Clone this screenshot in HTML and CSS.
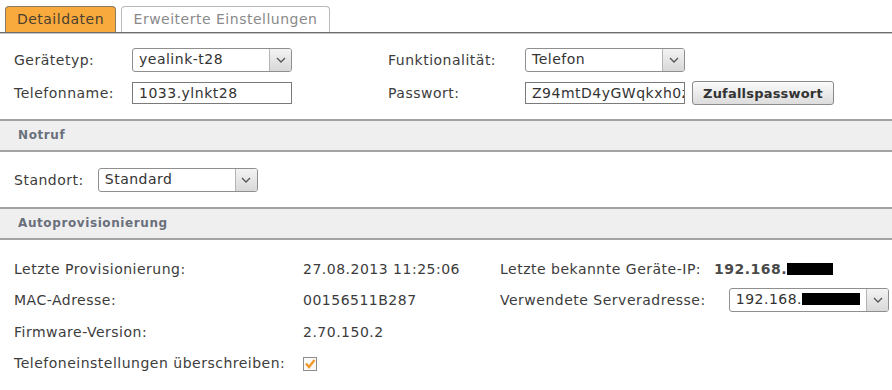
FILE: index.html
```html
<!DOCTYPE html>
<html lang="de">

<head>
  <meta charset="UTF-8">
  <title>Telefon bearbeiten</title>
  <link rel="stylesheet" href="styles.css">
</head>

<body>
  <div class="tabs">
    <div class="tab active">Detaildaten</div>
    <div class="tab">Erweiterte Einstellungen</div>
  </div>

  <div class="form-grid">
    <label>Gerätetyp:</label>
    <div class="select w160"><span class="sel-text">yealink-t28</span><span class="arrow"><svg width="10" height="6" viewBox="0 0 10 6"><path d="M1 1 L5 5 L9 1" fill="none" stroke="#555" stroke-width="1.3"/></svg></span></div>
    <label>Funktionalität:</label>
    <div class="select w160"><span class="sel-text">Telefon</span><span class="arrow"><svg width="10" height="6" viewBox="0 0 10 6"><path d="M1 1 L5 5 L9 1" fill="none" stroke="#555" stroke-width="1.3"/></svg></span></div>

    <label>Telefonname:</label>
    <div class="input w160">1033.ylnkt28</div>
    <label>Passwort:</label>
    <div class="pw-row">
      <div class="input w160 clip">Z94mtD4yGWqkxh0z</div>
      <button class="btn">Zufallspasswort</button>
    </div>
  </div>

  <div class="section-head">Notruf</div>

  <div class="standort">
    <label>Standort:</label>
    <div class="select w160"><span class="sel-text">Standard</span><span class="arrow"><svg width="10" height="6" viewBox="0 0 10 6"><path d="M1 1 L5 5 L9 1" fill="none" stroke="#555" stroke-width="1.3"/></svg></span></div>
  </div>

  <div class="section-head">Autoprovisionierung</div>

  <div class="info-grid">
    <span>Letzte Provisionierung:</span>
    <span>27.08.2013 11:25:06</span>
    <span>Letzte bekannte Geräte-IP: <b>192.168.</b><i class="redact r46"></i></span>

    <span>MAC-Adresse:</span>
    <span>00156511B287</span>
    <span class="server">Verwendete Serveradresse:
      <span class="select w160"><span class="sel-text">192.168.<i class="redact r58"></i></span><span class="arrow"><svg width="10" height="6" viewBox="0 0 10 6"><path d="M1 1 L5 5 L9 1" fill="none" stroke="#555" stroke-width="1.3"/></svg></span></span>
    </span>

    <span>Firmware-Version:</span>
    <span>2.70.150.2</span>
    <span></span>

    <span>Telefoneinstellungen überschreiben:</span>
    <span><span class="check"><svg width="12" height="12" viewBox="0 0 12 12"><path d="M2 5.5 L5 9 L10.5 2" fill="none" stroke="#f29a2e" stroke-width="2.4"/></svg></span></span>
    <span></span>
  </div>
</body>

</html>
```

FILE: styles.css
```css
:root {
  --text-color: #3c3c3c;
  --border-color: #8c8c8c;
  --orange: #f9aa3d;
  --head-bg: #efefef;
}

body {
  margin: 0;
  width: 892px;
  font-family: Verdana, "DejaVu Sans", sans-serif;
  font-size: 14px;
  letter-spacing: 0.5px;
  color: var(--text-color);
  background: #fff;
}

/* tabs */
.tabs {
  display: flex;
  gap: 5px;
  padding: 6px 0 0 5px;
  height: 26px;
  border-bottom: 1px solid #6f6f6f;
  box-shadow: 0 1px 0 #c4c4c4;
}

.tab {
  width: 207px;
  height: 25px;
  line-height: 24px;
  text-align: center;
  border: 1px solid #b9b9b9;
  border-bottom: none;
  border-radius: 4px 4px 0 0;
  color: #8a8a8a;
  background: #fff;
}

.tab.active {
  width: 109px;
  background: var(--orange);
  border-color: #8a7a62;
  color: #4a3f30;
}

/* top form */
.form-grid {
  display: grid;
  grid-template-columns: 118px 256px 137px auto;
  row-gap: 9px;
  align-items: center;
  padding: 15px 0 14px 14px;
}

.select {
  display: inline-flex;
  height: 24px;
  box-sizing: border-box;
  border: 1px solid #8f8f8f;
  border-radius: 3px;
  background: #fff;
  overflow: hidden;
  vertical-align: middle;
}

.w160 {
  width: 160px;
}

.sel-text {
  flex: 1;
  padding: 0 6px;
  line-height: 20px;
  color: #333;
  white-space: nowrap;
}

.arrow {
  width: 21px;
  flex: none;
  display: flex;
  align-items: center;
  justify-content: center;
  border-left: 1px solid #b5b5b5;
  background: linear-gradient(#f3f3f3, #d8d8d8);
}

.input {
  height: 22px;
  box-sizing: border-box;
  border: 1px solid #7a7a7a;
  padding: 0 6px;
  line-height: 20px;
  color: #333;
  white-space: nowrap;
}

.clip {
  overflow: hidden;
  padding-right: 0;
}

.pw-row {
  display: flex;
  align-items: center;
  gap: 7px;
}

.btn {
  height: 24px;
  padding: 0 10px;
  font-family: inherit;
  font-size: 13px;
  font-weight: bold;
  letter-spacing: 0.2px;
  color: #333;
  border: 1px solid #8a8a8a;
  border-radius: 3px;
  background: linear-gradient(#fbfbfb, #dcdcdc);
}

/* section bars */
.section-head {
  height: 29px;
  line-height: 29px;
  padding-left: 18px;
  font-size: 12px;
  letter-spacing: 0.6px;
  font-weight: bold;
  color: #6a6f7c;
  background: var(--head-bg);
  border-top: 2px solid #a3a3a3;
  border-bottom: 2px solid #a3a3a3;
}

.standort {
  display: flex;
  align-items: center;
  gap: 14px;
  padding: 16px 0 15px 14px;
}

/* info rows */
.info-grid {
  display: grid;
  grid-template-columns: 289px 197px auto;
  grid-auto-rows: 31.5px;
  align-items: center;
  padding: 13px 0 0 14px;
}

.info-grid b {
  margin-left: 8px;
  color: #4a4a4a;
}

.server {
  display: flex;
  align-items: center;
  gap: 23px;
}

.redact {
  display: inline-block;
  height: 12px;
  background: #000;
  vertical-align: -1px;
}

.r46 {
  width: 46px;
}

.r58 {
  width: 58px;
}

.check {
  display: inline-flex;
  align-items: center;
  justify-content: center;
  width: 14px;
  height: 14px;
  box-sizing: border-box;
  border: 1px solid #8c8c8c;
  background: #fafafa;
  vertical-align: middle;
}
```
